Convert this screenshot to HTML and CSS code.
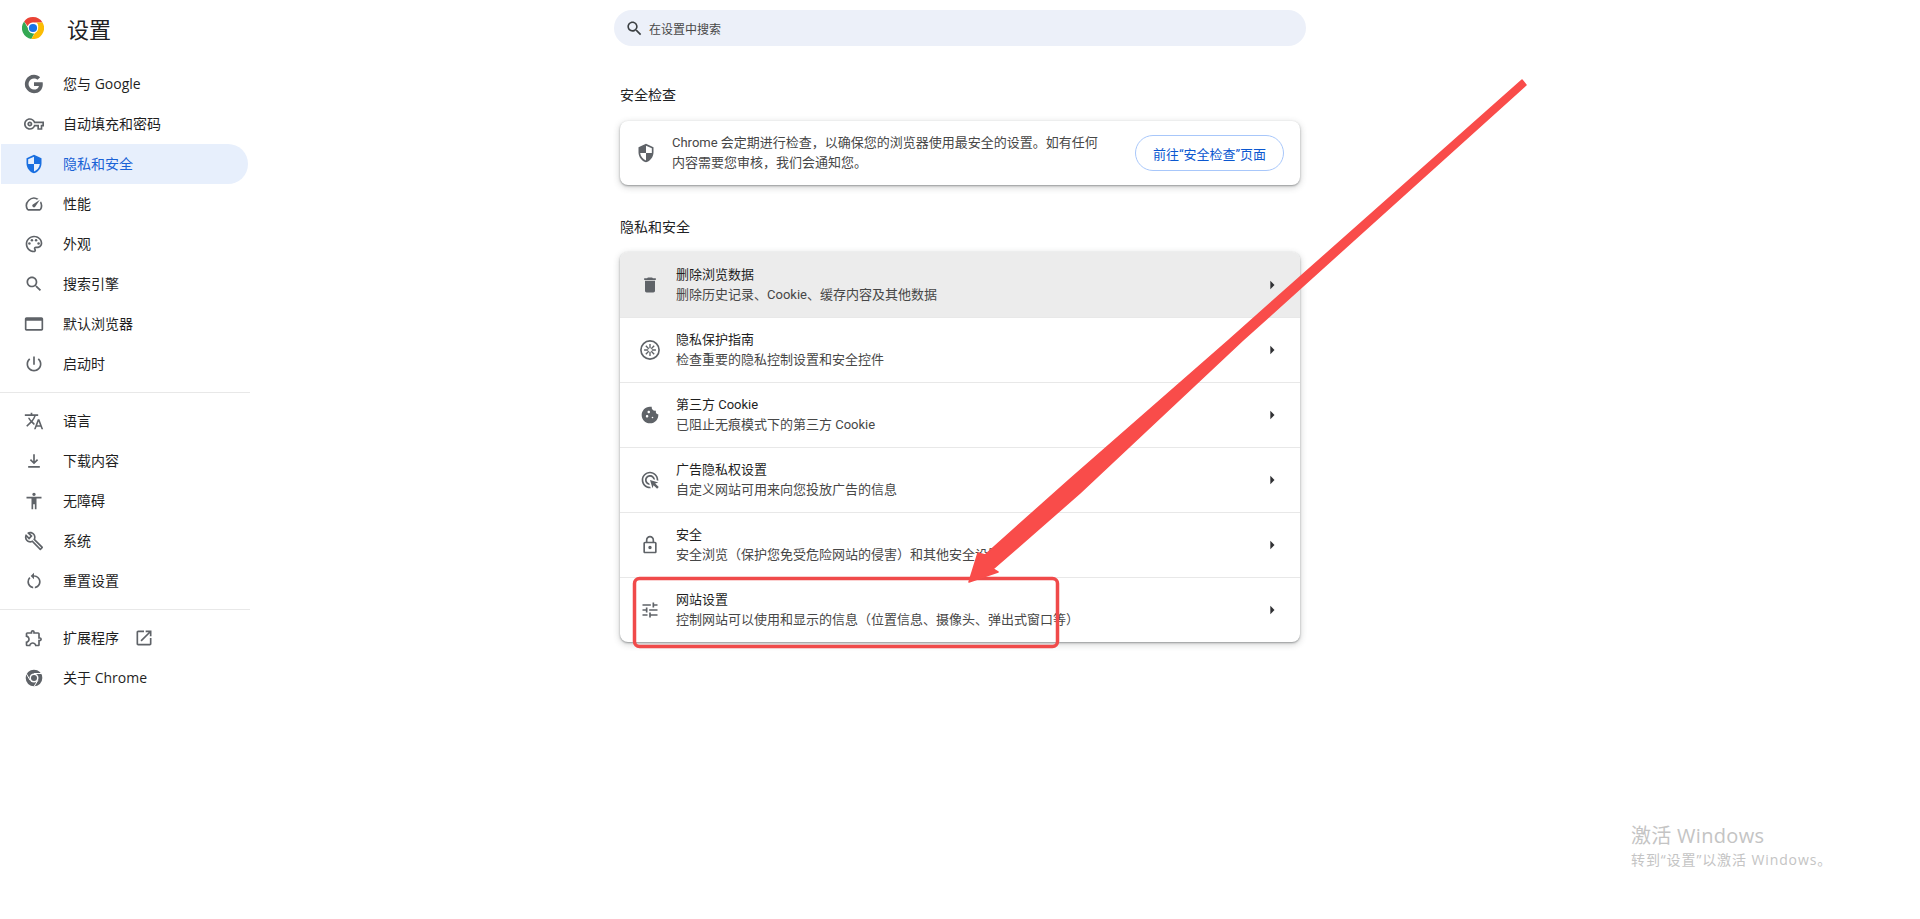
FILE: index.html
```html
<!DOCTYPE html>
<html lang="zh-CN">
<head>
    <meta charset="UTF-8">
    <title>设置</title>
    <link rel="stylesheet" href="styles.css">
</head>
<body>
    <div class="page">
        <!-- Sidebar -->
        <aside class="sidebar">
            <div class="brand">
                <svg class="brand-logo" viewBox="0 0 22 22">
                    <path d="M11 0a11 11 0 0 1 9.53 5.5H11a5.5 5.5 0 0 0-5.2 3.7L2.1 4.4A11 11 0 0 1 11 0z" fill="#ea4335"/>
                    <path d="M2.1 4.4l4.7 8.1A5.5 5.5 0 0 0 12.3 16.4l-2.9 5.5A11 11 0 0 1 2.1 4.4z" fill="#34a853"/>
                    <path d="M20.53 5.5A11 11 0 0 1 9.4 21.9l4.6-8a5.5 5.5 0 0 0 .6-8.4z" fill="#fbbc04"/>
                    <circle cx="11" cy="11" r="5.2" fill="#fff"/>
                    <circle cx="11" cy="11" r="4.1" fill="#1a73e8"/>
                </svg>
                <span class="brand-title">设置</span>
            </div>

            <nav class="nav-group nav-first">
                <a class="nav-item">
                    <svg class="icon" viewBox="0 0 24 24"><path d="M22.56 12.25c0-.78-.07-1.53-.2-2.25H12v4.26h5.92c-.26 1.37-1.04 2.53-2.21 3.3v2.77h3.57c2.08-1.92 3.28-4.74 3.28-8.08z"/><path d="M12 23c2.97 0 5.46-.98 7.28-2.66l-3.57-2.77c-.98.66-2.23 1.06-3.71 1.06-2.86 0-5.29-1.93-6.16-4.53H2.18v2.84C3.99 20.53 7.7 23 12 23z"/><path d="M5.84 14.09c-.22-.66-.35-1.36-.35-2.09s.13-1.43.35-2.09V7.07H2.18C1.43 8.55 1 10.22 1 12s.43 3.45 1.18 4.93l2.85-2.22.81-.62z"/><path d="M12 5.38c1.62 0 3.06.56 4.21 1.64l3.15-3.15C17.45 2.09 14.97 1 12 1 7.7 1 3.99 3.47 2.18 7.07l3.66 2.84c.87-2.6 3.3-4.53 6.16-4.53z"/></svg>
                    <span>您与 Google</span>
                </a>
                <a class="nav-item">
                    <svg class="icon" viewBox="0 0 24 24"><path d="M22 19h-6v-4h-2.68c-1.14 2.42-3.6 4-6.32 4-3.86 0-7-3.14-7-7s3.14-7 7-7c2.72 0 5.17 1.58 6.32 4H24v6h-2v4zm-4-2h2v-4h2v-2H11.94l-.23-.67C11.01 8.34 9.11 7 7 7c-2.76 0-5 2.24-5 5s2.24 5 5 5c2.11 0 4.01-1.34 4.71-3.33l.23-.67H18v4zM7 15c-1.65 0-3-1.35-3-3s1.35-3 3-3 3 1.35 3 3-1.35 3-3 3zm0-4c-.55 0-1 .45-1 1s.45 1 1 1 1-.45 1-1-.45-1-1-1z"/></svg>
                    <span>自动填充和密码</span>
                </a>
                <a class="nav-item active">
                    <svg class="icon" viewBox="0 0 24 24"><path d="M12 1L3 5v6c0 5.55 3.84 10.74 9 12 5.16-1.26 9-6.45 9-12V5l-9-4zm0 10.99h7c-.53 4.12-3.28 7.79-7 8.94V12H5V6.3l7-3.11v8.8z"/></svg>
                    <span>隐私和安全</span>
                </a>
                <a class="nav-item">
                    <svg class="icon" viewBox="0 0 24 24"><path d="M20.38 8.57l-1.23 1.85a8 8 0 0 1-.22 7.58H5.07A8 8 0 0 1 15.58 6.85l1.85-1.23A10 10 0 0 0 3.35 19a2 2 0 0 0 1.72 1h13.85a2 2 0 0 0 1.74-1 10 10 0 0 0-.27-10.44zm-9.79 6.84a2 2 0 0 0 2.83 0l5.66-8.49-8.49 5.66a2 2 0 0 0 0 2.83z"/></svg>
                    <span>性能</span>
                </a>
                <a class="nav-item">
                    <svg class="icon" viewBox="0 0 24 24"><path d="M12 22C6.49 22 2 17.51 2 12S6.49 2 12 2s10 4.04 10 9c0 3.31-2.69 6-6 6h-1.77c-.28 0-.5.22-.5.5 0 .12.05.23.13.33.41.47.64 1.06.64 1.67 0 1.38-1.12 2.5-2.5 2.5zm0-18c-4.41 0-8 3.59-8 8s3.59 8 8 8c.28 0 .5-.22.5-.5 0-.16-.08-.28-.14-.35-.41-.46-.63-1.05-.63-1.65 0-1.38 1.12-2.5 2.5-2.5H16c2.21 0 4-1.79 4-4 0-3.86-3.59-7-8-7z"/><circle cx="6.5" cy="11.5" r="1.5"/><circle cx="9.5" cy="7.5" r="1.5"/><circle cx="14.5" cy="7.5" r="1.5"/><circle cx="17.5" cy="11.5" r="1.5"/></svg>
                    <span>外观</span>
                </a>
                <a class="nav-item">
                    <svg class="icon" viewBox="0 0 24 24"><path d="M15.5 14h-.79l-.28-.27C15.41 12.59 16 11.11 16 9.5 16 5.91 13.09 3 9.5 3S3 5.91 3 9.5 5.91 16 9.5 16c1.61 0 3.09-.59 4.23-1.57l.27.28v.79l5 4.99L20.49 19l-4.99-5zm-6 0C7.01 14 5 11.99 5 9.5S7.01 5 9.5 5 14 7.01 14 9.5 11.99 14 9.5 14z"/></svg>
                    <span>搜索引擎</span>
                </a>
                <a class="nav-item">
                    <svg class="icon" viewBox="0 0 24 24"><path d="M21 4H3c-1.11 0-2 .9-2 2v12c0 1.1.89 2 2 2h18c1.1 0 2-.9 2-2V6c0-1.1-.89-2-2-2zm0 14H3V8h18v10z"/></svg>
                    <span>默认浏览器</span>
                </a>
                <a class="nav-item">
                    <svg class="icon" viewBox="0 0 24 24"><path d="M13 3h-2v10h2V3zm4.83 2.17l-1.42 1.42C17.99 7.86 19 9.81 19 12c0 3.87-3.13 7-7 7s-7-3.13-7-7c0-2.19 1.01-4.14 2.58-5.42L6.17 5.17C4.23 6.82 3 9.26 3 12c0 4.97 4.03 9 9 9s9-4.03 9-9c0-2.74-1.23-5.18-3.17-6.83z"/></svg>
                    <span>启动时</span>
                </a>
            </nav>

            <nav class="nav-group">
                <a class="nav-item">
                    <svg class="icon" viewBox="0 0 24 24"><path d="M12.87 15.07l-2.54-2.51.03-.03c1.74-1.94 2.98-4.17 3.71-6.53H17V4h-7V2H8v2H1v1.99h11.17C11.5 7.92 10.44 9.75 9 11.35 8.07 10.32 7.3 9.19 6.69 8h-2c.73 1.63 1.73 3.17 2.98 4.56l-5.09 5.02L4 19l5-5 3.11 3.11.76-2.04zM18.5 10h-2L12 22h2l1.12-3h4.75L21 22h2l-4.5-12zm-2.62 7l1.62-4.33L19.12 17h-3.24z"/></svg>
                    <span>语言</span>
                </a>
                <a class="nav-item">
                    <svg class="icon" viewBox="0 0 24 24"><path d="M5 20h14v-2H5v2zM12 16l-5-5 1.41-1.41L11 12.17V4h2v8.17l2.59-2.58L17 11l-5 5z"/></svg>
                    <span>下载内容</span>
                </a>
                <a class="nav-item">
                    <svg class="icon" viewBox="0 0 24 24"><path d="M12 2c1.1 0 2 .9 2 2s-.9 2-2 2-2-.9-2-2 .9-2 2-2zm9 7h-6v13h-2v-6h-2v6H9V9H3V7h18v2z"/></svg>
                    <span>无障碍</span>
                </a>
                <a class="nav-item">
                    <svg class="icon" viewBox="0 0 24 24"><path d="M22.61 18.99l-9.08-9.08c.93-2.34.45-5.1-1.44-7C9.79.61 6.21.4 3.66 2.26L7.5 6.11 6.08 7.52 2.25 3.69C.39 6.23.6 9.82 2.9 12.11c1.86 1.86 4.57 2.35 6.89 1.48l9.11 9.11c.39.39 1.02.39 1.41 0l2.3-2.3c.4-.38.4-1.02 0-1.41zm-3 1.6l-9.46-9.46c-.61.45-1.29.72-2 .82-1.36.2-2.79-.21-3.83-1.25C3.37 9.76 2.93 8.5 3 7.26l3.09 3.09 4.24-4.24-3.09-3.09c1.24-.07 2.49.37 3.44 1.31 1.08 1.08 1.49 2.57 1.24 3.96-.12.71-.42 1.37-.88 1.96l9.45 9.45-.88.88z"/></svg>
                    <span>系统</span>
                </a>
                <a class="nav-item">
                    <svg class="icon" viewBox="0 0 24 24"><path d="M12 5V2L8 6l4 4V7c3.31 0 6 2.69 6 6 0 2.97-2.17 5.43-5 5.91v2.02c3.95-.49 7-3.85 7-7.93 0-4.42-3.58-8-8-8zm-6 8c0-1.65.67-3.15 1.76-4.24L6.34 7.34A7.96 7.96 0 0 0 4 13c0 4.08 3.05 7.44 7 7.93v-2.02c-2.83-.48-5-2.94-5-5.91z"/></svg>
                    <span>重置设置</span>
                </a>
            </nav>

            <nav class="nav-group">
                <a class="nav-item">
                    <svg class="icon" viewBox="0 0 24 24"><path d="M10.5 4.5c.28 0 .5.22.5.5v2h6v6h2c.28 0 .5.22.5.5s-.22.5-.5.5h-2v6h-2.12c-.68-1.75-2.39-3-4.38-3s-3.7 1.25-4.38 3H4v-2.12c1.75-.68 3-2.39 3-4.38 0-1.99-1.24-3.7-2.99-4.38L4 7h6V5c0-.28.22-.5.5-.5m0-2C9.12 2.5 8 3.62 8 5H4c-1.1 0-1.99.9-1.99 2v3.8h.29c1.49 0 2.7 1.21 2.7 2.7s-1.21 2.7-2.7 2.7H2V20c0 1.1.9 2 2 2h3.8v-.3c0-1.49 1.21-2.7 2.7-2.7s2.7 1.21 2.7 2.7v.3H17c1.1 0 2-.9 2-2v-4c1.38 0 2.5-1.12 2.5-2.5S20.38 11 19 11V7c0-1.1-.9-2-2-2h-4c0-1.38-1.12-2.5-2.5-2.5z"/></svg>
                    <span>扩展程序</span>
                    <svg class="icon external" viewBox="0 0 24 24"><path d="M19 19H5V5h7V3H5c-1.11 0-2 .9-2 2v14c0 1.1.89 2 2 2h14c1.1 0 2-.9 2-2v-7h-2v7zM14 3v2h3.59l-9.83 9.83 1.41 1.41L19 6.41V10h2V3h-7z"/></svg>
                </a>
                <a class="nav-item">
                    <svg class="icon" viewBox="0 0 24 24"><circle cx="12" cy="12" r="10"/><circle cx="12" cy="12" r="5.4" fill="#fff"/><circle cx="12" cy="12" r="3.6"/><path d="M12 6.6h9M7.3 14.7L2.9 7M16.7 14.7L12.2 22" stroke="#fff" stroke-width="1.2" fill="none"/></svg>
                    <span>关于 Chrome</span>
                </a>
            </nav>
        </aside>

        <!-- Main column -->
        <main class="main">
            <div class="search-box">
                <svg class="icon" viewBox="0 0 24 24"><path d="M15.5 14h-.79l-.28-.27C15.41 12.59 16 11.11 16 9.5 16 5.91 13.09 3 9.5 3S3 5.91 3 9.5 5.91 16 9.5 16c1.61 0 3.09-.59 4.23-1.57l.27.28v.79l5 4.99L20.49 19l-4.99-5zm-6 0C7.01 14 5 11.99 5 9.5S7.01 5 9.5 5 14 7.01 14 9.5 11.99 14 9.5 14z"/></svg>
                <span>在设置中搜索</span>
            </div>

            <div class="content">
                <h2 class="section-title">安全检查</h2>
                <section class="card check-card">
                    <svg class="icon" viewBox="0 0 24 24"><path d="M12 1L3 5v6c0 5.55 3.84 10.74 9 12 5.16-1.26 9-6.45 9-12V5l-9-4zm0 2.2l7 3.1V12h-7v8.9c-3.72-1.15-6.47-4.82-7-8.9h7V3.2z"/></svg>
                    <p class="check-text">Chrome 会定期进行检查，以确保您的浏览器使用最安全的设置。如有任何内容需要您审核，我们会通知您。</p>
                    <button class="check-button">前往“安全检查”页面</button>
                </section>

                <h2 class="section-title second">隐私和安全</h2>
                <section class="card">
                    <div class="row hover">
                        <svg class="icon" viewBox="0 0 24 24"><path d="M6 19c0 1.1.9 2 2 2h8c1.1 0 2-.9 2-2V7H6v12zM19 4h-3.5l-1-1h-5l-1 1H5v2h14V4z"/></svg>
                        <div class="row-text">
                            <div class="row-title">删除浏览数据</div>
                            <div class="row-sub">删除历史记录、Cookie、缓存内容及其他数据</div>
                        </div>
                        <svg class="caret" viewBox="0 0 24 24"><path d="M10 17l5-5-5-5v10z"/></svg>
                    </div>
                    <div class="row">
                        <svg class="icon" viewBox="1 1 22 22"><circle cx="12" cy="12" r="10" fill="none" stroke="#5f6368" stroke-width="1.8"/><path d="M12 10V5.5M12 14v4.5M10 12H5.5M14 12h4.5M10.6 10.6L7.4 7.4M13.4 10.6l3.2-3.2M10.6 13.4l-3.2 3.2M13.4 13.4l3.2 3.2" stroke="#5f6368" stroke-width="1.5" fill="none"/></svg>
                        <div class="row-text">
                            <div class="row-title">隐私保护指南</div>
                            <div class="row-sub">检查重要的隐私控制设置和安全控件</div>
                        </div>
                        <svg class="caret" viewBox="0 0 24 24"><path d="M10 17l5-5-5-5v10z"/></svg>
                    </div>
                    <div class="row">
                        <svg class="icon" viewBox="0 0 24 24"><path d="M21.95 10.99c-1.79-.03-3.7-1.95-2.68-4.22-2.97 1-5.78-1.59-5.19-4.56C7.11.74 2 6.41 2 12c0 5.52 4.48 10 10 10 5.89 0 10.54-5.08 9.95-11.01zM8.5 15c-.83 0-1.5-.67-1.5-1.5S7.67 12 8.5 12s1.5.67 1.5 1.5S9.33 15 8.5 15zm2-5C9.67 10 9 9.33 9 8.5S9.67 7 10.5 7s1.5.67 1.5 1.5-.67 1.5-1.5 1.5zm4.5 6c-.55 0-1-.45-1-1s.45-1 1-1 1 .45 1 1-.45 1-1 1z"/></svg>
                        <div class="row-text">
                            <div class="row-title">第三方 Cookie</div>
                            <div class="row-sub">已阻止无痕模式下的第三方 Cookie</div>
                        </div>
                        <svg class="caret" viewBox="0 0 24 24"><path d="M10 17l5-5-5-5v10z"/></svg>
                    </div>
                    <div class="row">
                        <svg class="icon" viewBox="0 0 24 24"><path d="M11.71 17.99C8.53 17.84 6 15.22 6 12c0-3.31 2.69-6 6-6 3.22 0 5.84 2.53 5.99 5.71l-2.1-.63C15.48 9.31 13.89 8 12 8c-2.21 0-4 1.79-4 4 0 1.89 1.31 3.48 3.08 3.89l.63 2.1zM22 12c0 .3-.01.6-.04.9l-1.97-.59c.01-.1.01-.21.01-.31 0-4.42-3.58-8-8-8s-8 3.58-8 8 3.58 8 8 8c.1 0 .21 0 .31-.01l.59 1.97c-.3.03-.6.04-.9.04-5.52 0-10-4.48-10-10S6.48 2 12 2s10 4.48 10 10zm-3.77 4.26L22 15l-10-3 3 10 1.26-3.77 4.27 4.27 1.98-1.98-4.28-4.26z"/></svg>
                        <div class="row-text">
                            <div class="row-title">广告隐私权设置</div>
                            <div class="row-sub">自定义网站可用来向您投放广告的信息</div>
                        </div>
                        <svg class="caret" viewBox="0 0 24 24"><path d="M10 17l5-5-5-5v10z"/></svg>
                    </div>
                    <div class="row">
                        <svg class="icon" viewBox="0 0 24 24"><path d="M18 8h-1V6c0-2.76-2.24-5-5-5S7 3.24 7 6v2H6c-1.1 0-2 .9-2 2v10c0 1.1.9 2 2 2h12c1.1 0 2-.9 2-2V10c0-1.1-.9-2-2-2zM9 6c0-1.66 1.34-3 3-3s3 1.34 3 3v2H9V6zm9 14H6V10h12v10zm-6-3c1.1 0 2-.9 2-2s-.9-2-2-2-2 .9-2 2 .9 2 2 2z"/></svg>
                        <div class="row-text">
                            <div class="row-title">安全</div>
                            <div class="row-sub">安全浏览（保护您免受危险网站的侵害）和其他安全设置</div>
                        </div>
                        <svg class="caret" viewBox="0 0 24 24"><path d="M10 17l5-5-5-5v10z"/></svg>
                    </div>
                    <div class="row">
                        <svg class="icon" viewBox="0 0 24 24"><path d="M3 17v2h6v-2H3zM3 5v2h10V5H3zm10 16v-2h8v-2h-8v-2h-2v6h2zM7 9v2H3v2h4v2h2V9H7zm14 4v-2H11v2h10zm-6-4h2V7h4V5h-4V3h-2v6z"/></svg>
                        <div class="row-text">
                            <div class="row-title">网站设置</div>
                            <div class="row-sub">控制网站可以使用和显示的信息（位置信息、摄像头、弹出式窗口等）</div>
                        </div>
                        <svg class="caret" viewBox="0 0 24 24"><path d="M10 17l5-5-5-5v10z"/></svg>
                    </div>
                </section>
            </div>
        </main>
    </div>

    <!-- Screenshot annotation drawn over the page -->
    <svg class="annotation" viewBox="0 0 1920 919">
        <rect x="634.5" y="578.5" width="423" height="68" rx="5" fill="none" stroke="#f04a4a" stroke-width="3.5"/>
        <polygon points="1522,80 1526,85 1243,340 1080,493 993,569 998,572 969,582 978,553 985,555 1069,480 1229,340" fill="#f94c4a" stroke="#f94c4a" stroke-width="1.5" stroke-linejoin="round"/>
    </svg>

    <div class="watermark">
        <div class="watermark-title">激活 Windows</div>
        <div class="watermark-sub">转到“设置”以激活 Windows。</div>
    </div>
</body>
</html>
```

FILE: styles.css
```css
:root {
    --text-primary: #1f1f1f;
    --text-secondary: #474747;
    --icon-color: #5f6368;
    --accent-color: #0b57d0;
    --border-color: #e8e8e8;
}

* {
    box-sizing: border-box;
}

html, body {
    height: 100%;
    overflow: hidden;
}

body {
    position: relative;
    margin: 0;
    background: #ffffff;
    color: var(--text-primary);
    font-family: Roboto, "Noto Sans CJK SC", sans-serif;
    font-size: 13px;
}

.page {
    display: grid;
    grid-template-columns: 250px 1fr 250px;
    height: 100%;
}

.icon {
    flex: none;
    width: 20px;
    height: 20px;
    fill: var(--icon-color);
}

/* Sidebar */
.brand {
    display: flex;
    align-items: center;
    height: 56px;
    padding-left: 22px;
}

.brand-logo {
    width: 22px;
    height: 22px;
}

.brand-title {
    margin-left: 23px;
    font-size: 22px;
    color: #202124;
}

.nav-group {
    margin-top: 8px;
    padding-top: 8px;
    border-top: 1px solid var(--border-color);
}

.nav-group.nav-first {
    padding-top: 0;
    border-top: none;
}

.nav-item {
    display: flex;
    align-items: center;
    gap: 19px;
    height: 40px;
    padding-left: 24px;
    font-family: "Open Sans", "Noto Sans CJK SC", sans-serif;
    font-size: 14px;
    color: #1f1f1f;
}

.nav-item span {
    margin-bottom: 2px;
}

.nav-item.active {
    width: 247px;
    margin-left: 1px;
    padding-left: 23px;
    border-radius: 0 20px 20px 0;
    background: #e7effc;
    color: #1a62d6;
}

.nav-item.active .icon {
    fill: #1a6fe0;
}

.nav-item .external {
    margin-left: -4px;
}

/* Main column */
.main {
    display: flex;
    flex-direction: column;
    align-items: center;
}

.search-box {
    display: flex;
    align-items: center;
    gap: 5px;
    width: 692px;
    height: 36px;
    margin-top: 10px;
    padding-left: 11px;
    border-radius: 18px;
    background: #ecf0f9;
    font-size: 12px;
    color: #474747;
}

.search-box .icon {
    width: 19px;
    height: 19px;
    fill: #3c4043;
}

.content {
    width: 680px;
}

.section-title {
    margin: 39px 0 0;
    height: 36px;
    font-size: 14px;
    font-weight: 400;
    line-height: 20px;
    color: #202124;
}

.section-title.second {
    margin-top: 32px;
    height: 35px;
}

.card {
    border-radius: 8px;
    background: #ffffff;
    overflow: hidden;
    box-shadow: 0 1px 2px rgba(60, 64, 67, 0.45), 0 2px 6px 1px rgba(60, 64, 67, 0.2);
}

.check-card {
    display: flex;
    align-items: center;
    gap: 16px;
    height: 64px;
    padding: 0 16px;
}

.check-text {
    flex: 1;
    margin: 0;
    line-height: 20px;
    color: var(--text-secondary);
}

.check-button {
    flex: none;
    width: 149px;
    height: 36px;
    margin-left: 14px;
    padding: 0;
    border: 1px solid #a8c7fa;
    border-radius: 18px;
    background: #ffffff;
    color: var(--accent-color);
    font-family: inherit;
    font-size: 13px;
}

.row {
    display: flex;
    align-items: center;
    gap: 16px;
    height: 65px;
    padding: 0 18px 0 20px;
    border-top: 1px solid var(--border-color);
}

.row:first-child {
    border-top: none;
}

.row.hover {
    background: #ececec;
}

.row-text {
    flex: 1;
    line-height: 20px;
}

.row-title {
    color: #1f1f1f;
}

.row-sub {
    color: var(--text-secondary);
}

.caret {
    flex: none;
    width: 20px;
    height: 20px;
    fill: #303134;
}

/* Overlays */
.annotation {
    position: absolute;
    top: 0;
    left: 0;
    width: 1920px;
    height: 919px;
    pointer-events: none;
}

.watermark {
    position: absolute;
    top: 822px;
    left: 1631px;
    color: #c4c4c4;
    font-family: "Open Sans", "Noto Sans CJK SC", sans-serif;
}

.watermark-title {
    font-size: 20px;
    line-height: 28px;
    letter-spacing: 0.3px;
}

.watermark-sub {
    font-size: 14px;
    line-height: 20px;
    letter-spacing: 0.9px;
}
```
